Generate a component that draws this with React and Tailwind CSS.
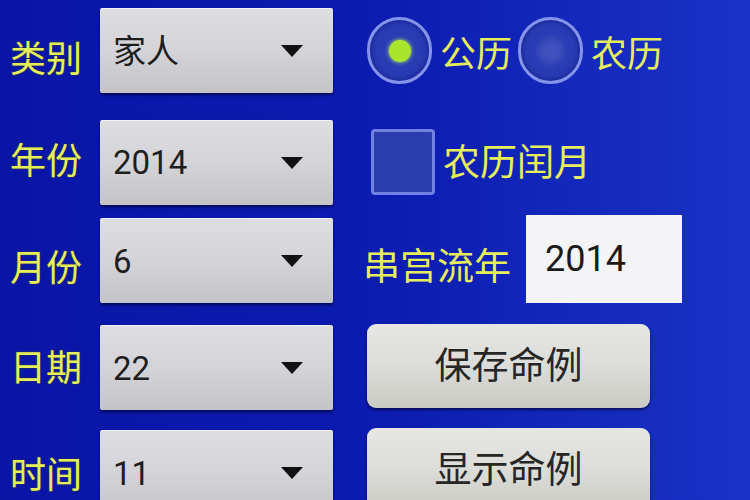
const font = { fontFamily: 'Roboto, "Noto Sans CJK SC", sans-serif' }

function Label({ children, className = '' }) {
  return (
    <div className={`w-[90px] shrink-0 text-[36px] leading-none text-[#e6ee5c] [text-shadow:0_0_2px_#3a4a20] ${className}`}>
      {children}
    </div>
  )
}

function Spinner({ value, className = '' }) {
  return (
    <div className={`w-[233px] h-[85px] shrink-0 flex items-center justify-between pl-[13px] pr-[30px] rounded-[2px] border-t border-[#eef0fa] bg-gradient-to-b from-[#dedee2] via-[#d4d4d8] to-[#c4c4c8] shadow-[0_2px_3px_rgba(0,0,30,0.6)] ${className}`}>
      <span className="text-[33px] leading-none text-[#1e1e1e]">{value}</span>
      <svg width="22" height="12" viewBox="0 0 22 12">
        <polygon points="0,0 22,0 11,12" fill="#111" />
      </svg>
    </div>
  )
}

function Radio({ checked }) {
  return (
    <div className="w-[65px] h-[67px] shrink-0 rounded-full border-[3px] border-[#8494ea] bg-[#2a3cb4] shadow-[inset_0_0_6px_rgba(10,20,120,0.8)] flex items-center justify-center">
      {checked ? (
        <div className="w-[22px] h-[22px] rounded-full bg-[#a8e42c] shadow-[0_0_4px_#c8ff60]" />
      ) : (
        <div className="w-[26px] h-[26px] rounded-full bg-[#4050bc] blur-[3px]" />
      )}
    </div>
  )
}

function Button({ children }) {
  return (
    <div className="w-[283px] h-[84px] shrink-0 flex items-center justify-center rounded-[9px] bg-gradient-to-b from-[#e6e6e4] via-[#dcdcd8] to-[#cbcbc5] shadow-[0_2px_3px_rgba(0,0,30,0.6)] text-[37px] leading-none text-[#262626]">
      {children}
    </div>
  )
}

export default function App() {
  return (
    <div
      style={font}
      className="w-[750px] h-[500px] overflow-hidden bg-gradient-to-r from-[#0a15a6] via-[#0c1bb0] to-[#1a32c6] pl-[10px] pt-[8px]"
    >
      {/* 类别 */}
      <div className="flex items-center h-[85px]">
        <Label className="pt-[18px]">类别</Label>
        <Spinner value="家人" />
        <div className="flex items-center ml-[34px]">
          <Radio checked />
          <span className="ml-[8px] text-[36px] leading-none text-[#e6ee5c] pt-[8px]">公历</span>
          <div className="ml-[6px]">
            <Radio />
          </div>
          <span className="ml-[8px] text-[36px] leading-none text-[#e6ee5c] pt-[8px]">农历</span>
        </div>
      </div>

      {/* 年份 */}
      <div className="flex items-center h-[84px] mt-[27px]">
        <Label>年份</Label>
        <Spinner value="2014" className="h-[84px]" />
        <div className="flex items-center ml-[38px]">
          <div className="w-[64px] h-[66px] rounded-[4px] border-[3px] border-[#7182e2] bg-[#2b3cac]" />
          <span className="ml-[8px] text-[37px] leading-none text-[#e6ee5c] pt-[2px]">农历闰月</span>
        </div>
      </div>

      {/* 月份 */}
      <div className="flex items-end h-[88px] mt-[11px]">
        <Label className="pb-[16px]">月份</Label>
        <Spinner value="6" />
        <div className="flex items-center ml-[30px] h-[88px]">
          <span className="text-[37px] leading-none text-[#e6ee5c] pt-[16px] w-[163px]">串宫流年</span>
          <div className="w-[156px] h-[88px] bg-[#f4f4f6] flex items-center pl-[19px] text-[36px] leading-none text-[#1a1a1a]">
            2014
          </div>
        </div>
      </div>

      {/* 日期 */}
      <div className="flex items-center h-[86px] mt-[20px]">
        <Label className="pt-[6px]">日期</Label>
        <Spinner value="22" className="h-[84px] mt-[3px]" />
        <div className="ml-[34px]">
          <Button>保存命例</Button>
        </div>
      </div>

      {/* 时间 */}
      <div className="flex items-start h-[86px] mt-[19px]">
        <Label className="pt-[30px]">时间</Label>
        <Spinner value="11" className="mt-[2px]" />
        <div className="ml-[34px]">
          <Button>显示命例</Button>
        </div>
      </div>
    </div>
  )
}
